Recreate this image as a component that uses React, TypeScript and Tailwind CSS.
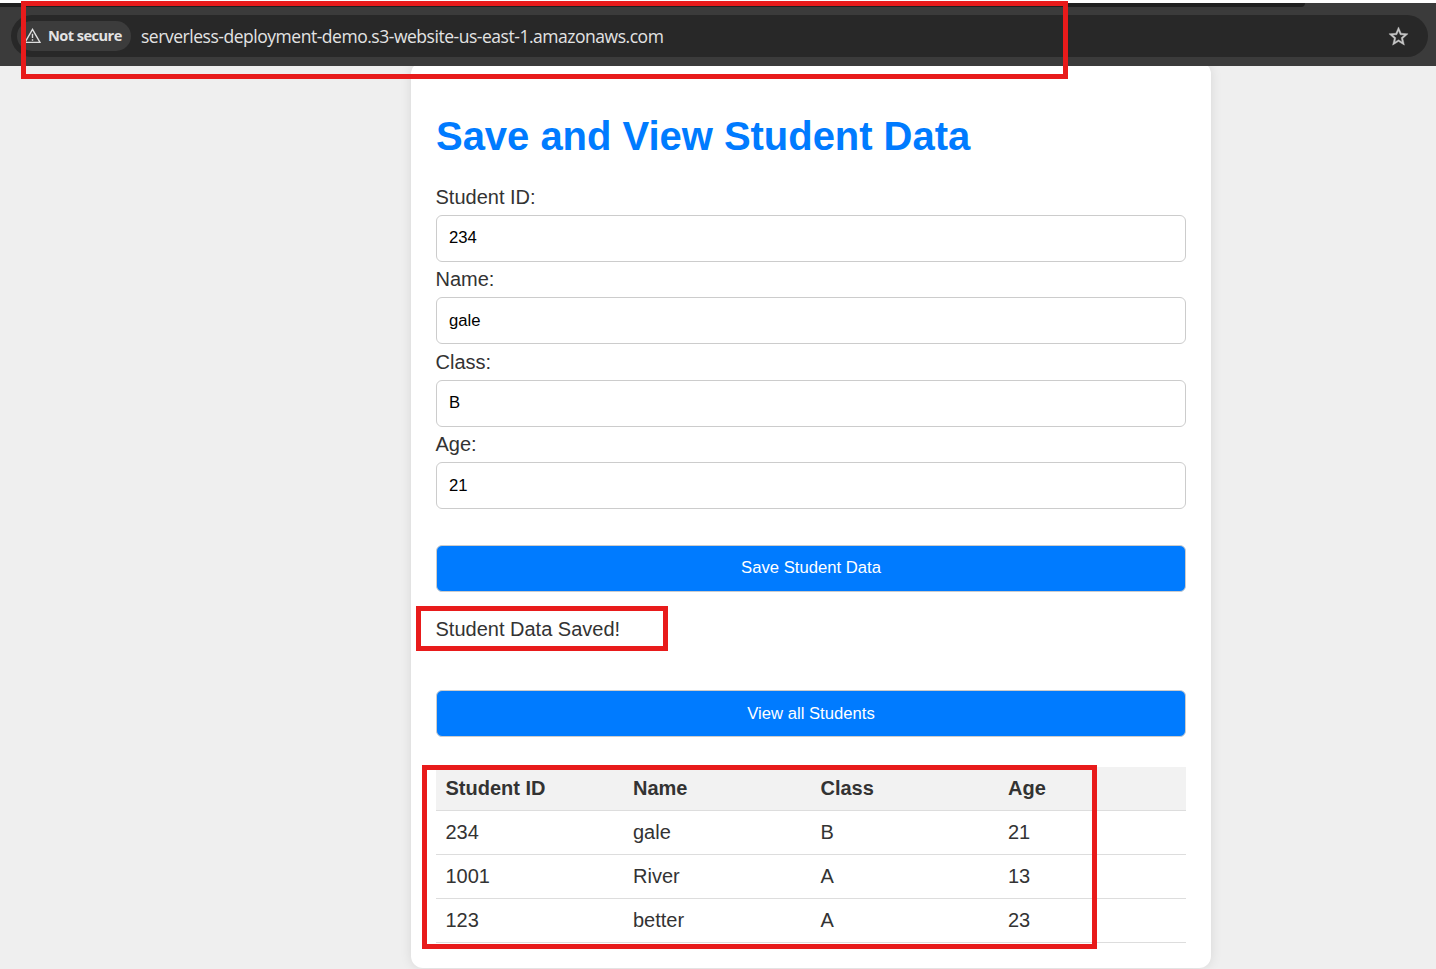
import React from "react";

const fields = [
  { label: "Student ID:", value: "234", labelBox: "h-[35px] pt-[5px]", inputPad: "pb-[2px]" },
  { label: "Name:", value: "gale", labelBox: "h-[35px] pt-[5px]", inputPad: "pb-0" },
  { label: "Class:", value: "B", labelBox: "h-[36px] pt-[6px]", inputPad: "pb-[2px]" },
  { label: "Age:", value: "21", labelBox: "h-[35px] pt-[5px]", inputPad: "pb-0" },
];

const students = [
  ["234", "gale", "B", "21"],
  ["1001", "River", "A", "13"],
  ["123", "better", "A", "23"],
];

function BrowserBar() {
  return (
    <header className="relative z-10 h-[66px] bg-[#3b3b3b]">
      <div className="h-[3px] bg-white" />
      <div className="h-1 w-[1305px] rounded-br-[10px] bg-[#202020]" />
      <div className="mt-2 mr-2 ml-[11px] flex h-[42px] items-center rounded-full bg-[#282828] pr-[18px] pl-[6px]">
        <div className="flex h-[30px] w-[114px] items-center rounded-full bg-[#3c3c3c] pl-[7px]">
          <svg width="17" height="16" viewBox="0 0 17 16" fill="none" stroke="#dedede" strokeWidth="1.4">
            <path d="M8.5 1.4 16 14.4H1Z" />
            <path d="M8.5 5.8v4.3M8.5 11.2v1.5" />
          </svg>
          <span className="mb-[2px] ml-[7px] font-['Open_Sans',sans-serif] text-[14.6px] leading-5 font-bold tracking-[-0.55px] whitespace-nowrap text-[#e3e3e3]">
            Not secure
          </span>
        </div>
        <span className="ml-[10px] font-['Open_Sans',sans-serif] text-[17.5px] leading-6 tracking-[-0.47px] whitespace-nowrap text-[#e3e3e3]">
          serverless-deployment-demo.s3-website-us-east-1.amazonaws.com
        </span>
        <svg className="ml-auto" width="23" height="23" viewBox="0 0 24 24" fill="#c7c7c7" stroke="#c7c7c7" strokeWidth="0.4">
          <path d="m22 9.24-7.19-.62L12 2 9.19 8.63 2 9.24l5.46 4.73L5.82 21 12 17.27 18.18 21l-1.63-7.03L22 9.24zM12 15.4l-3.76 2.27 1-4.28-3.32-2.88 4.38-.38L12 6.1l1.71 4.04 4.38.38-3.32 2.88 1 4.28L12 15.4z" />
        </svg>
      </div>
    </header>
  );
}

function ActionButton({ pad, children }: { pad: string; children: React.ReactNode }) {
  return (
    <button className={`block h-[47px] w-full rounded-[6px] border border-[#ccc] bg-[#007bff] text-[16.67px] text-white ${pad}`}>
      {children}
    </button>
  );
}

export default function App() {
  return (
    <div className="relative h-[969px] w-[1436px] overflow-hidden bg-[#efefef] font-['Liberation_Sans',Arial,sans-serif] text-xl text-[#333]">
      <BrowserBar />
      <main className="-mt-[4px] ml-[411px] h-[906px] w-[800px] rounded-[12px] bg-white px-[25px] pt-[50px] shadow-[0_0_12px_rgba(0,0,0,0.1)]">
        <h1 className="h-[68px] text-[40px] leading-[48px] font-bold tracking-[-0.03px] whitespace-nowrap text-[#007bff]">
          Save and View Student Data
        </h1>
        {fields.map((f) => (
          <div key={f.label}>
            <div className={`-ml-[0.5px] leading-6 ${f.labelBox}`}>{f.label}</div>
            <input
              className={`block h-[47px] w-full rounded-[6px] border border-[#ccc] bg-white px-3 text-[16.67px] text-black ${f.inputPad}`}
              defaultValue={f.value}
            />
          </div>
        ))}
        <div className="mt-9">
          <ActionButton pad="pb-[2px]">Save Student Data</ActionButton>
        </div>
        <p className="mt-[25px] -ml-[0.5px] h-[73px] leading-6">Student Data Saved!</p>
        <ActionButton pad="pb-0">View all Students</ActionButton>
        <table className="mt-[30px] w-full table-fixed border-collapse text-left">
          <thead>
            <tr className="h-[43px] border-b border-[#ddd] bg-[#f2f2f2]">
              {["Student ID", "Name", "Class", "Age"].map((h) => (
                <th key={h} className="p-0 pl-[9.5px] leading-6 font-bold">{h}</th>
              ))}
            </tr>
          </thead>
          <tbody>
            {students.map((row) => (
              <tr key={row[0]} className="h-11 border-b border-[#ddd]">
                {row.map((cell, i) => (
                  <td key={i} className="p-0 pl-[9.5px] leading-6">{cell}</td>
                ))}
              </tr>
            ))}
          </tbody>
        </table>
      </main>
      <div className="pointer-events-none absolute top-px left-[21px] z-20 h-[78px] w-[1047px] border-[5px] border-[#e81b1b]" />
      <div className="pointer-events-none absolute top-[606px] left-[416px] z-20 h-[45px] w-[252px] border-[5px] border-[#e81b1b]" />
      <div className="pointer-events-none absolute top-[765px] left-[422px] z-20 h-[184px] w-[675px] border-[5px] border-[#e81b1b]" />
    </div>
  );
}
